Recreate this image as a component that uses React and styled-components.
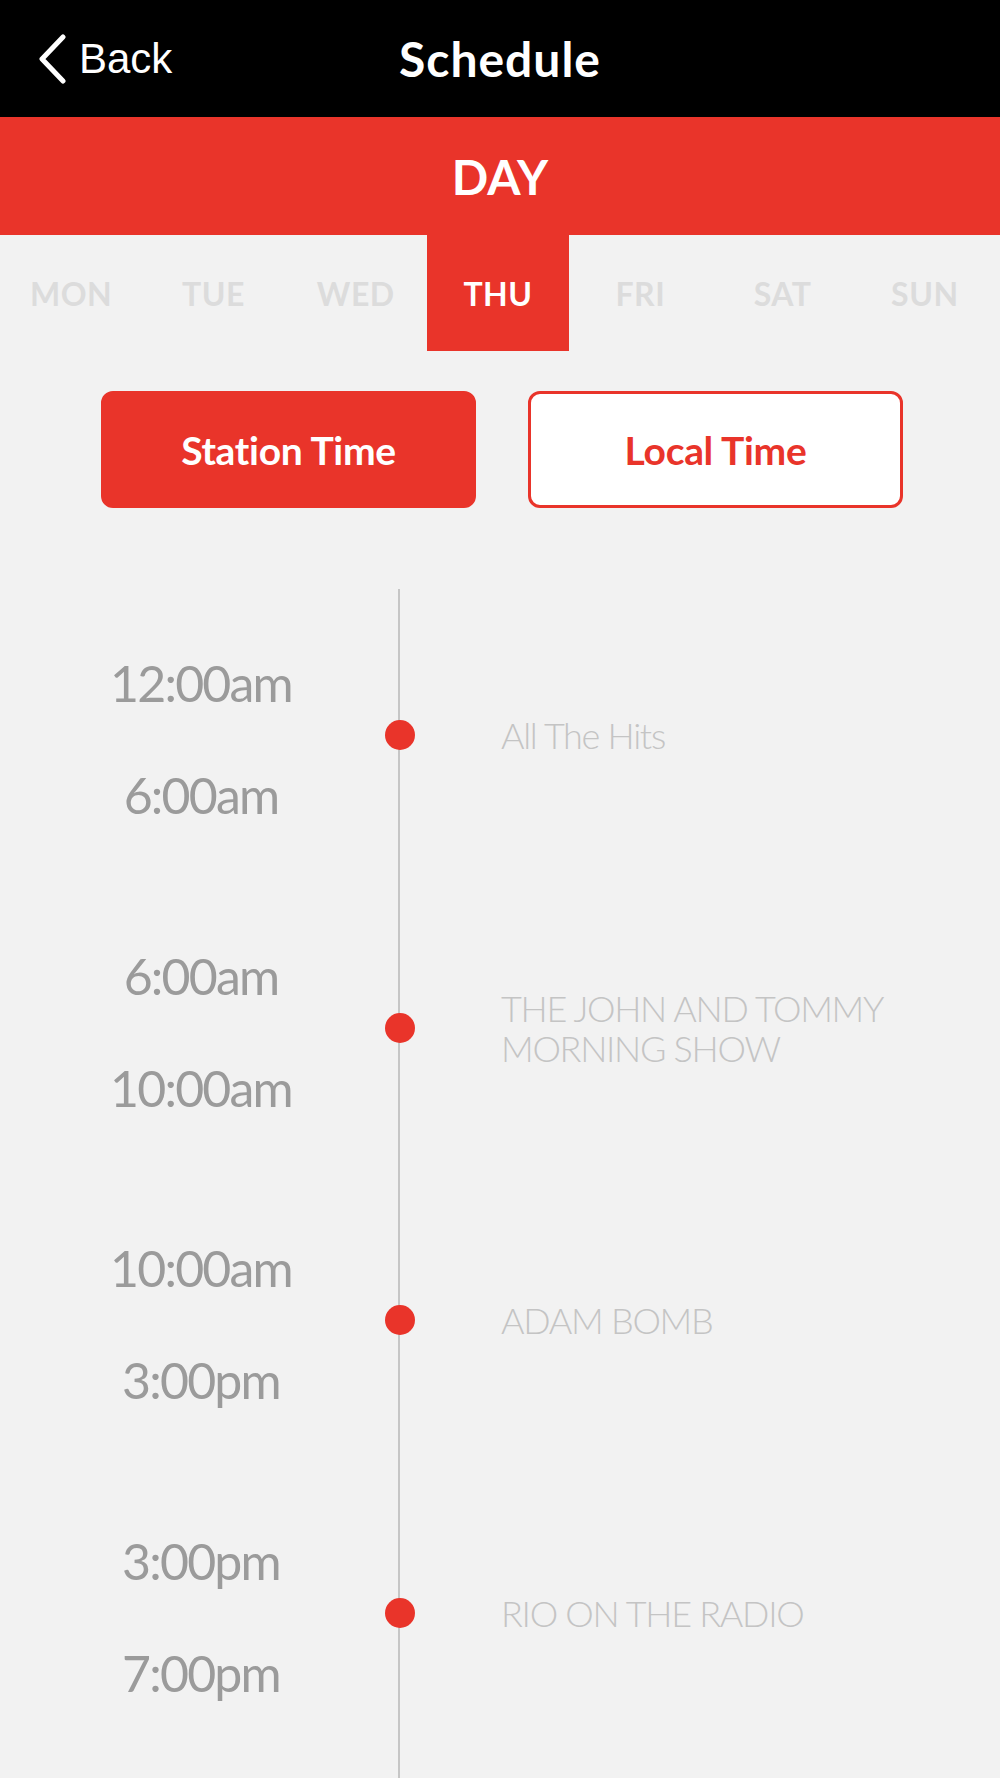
import React from "react";
import styled, { createGlobalStyle } from "styled-components";

const RED = "#e9342a";

const GlobalStyle = createGlobalStyle`
  html, body { margin: 0; padding: 0; background: #f2f2f2; }
  body { font-family: Lato, "Noto Sans", sans-serif; -webkit-font-smoothing: antialiased; }
  * { box-sizing: border-box; }
`;

const Page = styled.div`
  min-height: 100vh;
  display: flex;
  flex-direction: column;
  background: #f2f2f2;
`;

const NavBar = styled.header`
  height: 117px;
  background: #000;
  display: grid;
  grid-template-columns: 1fr auto 1fr;
  align-items: center;
`;

const BackButton = styled.button`
  justify-self: start;
  display: flex;
  align-items: center;
  gap: 12px;
  margin-left: 37px;
  padding: 0;
  background: none;
  border: 0;
  color: #fff;
  font-family: "Liberation Sans", Arial, sans-serif;
  font-size: 42px;
  cursor: pointer;
`;

const Title = styled.h1`
  margin: 0;
  color: #fff;
  font-family: Lato, sans-serif;
  font-weight: 700;
  font-size: 48px;
  letter-spacing: 1px;
`;

const DayBanner = styled.div`
  height: 118px;
  background: ${RED};
  color: #fff;
  display: flex;
  align-items: center;
  justify-content: center;
  font-weight: 700;
  font-size: 48px;
`;

const Tabs = styled.nav`
  height: 116px;
  display: grid;
  grid-template-columns: repeat(7, 1fr);
  padding-right: 4px;
`;

const Tab = styled.div`
  display: flex;
  align-items: center;
  justify-content: center;
  font-weight: 700;
  font-size: 32px;
  letter-spacing: 0.5px;
  color: ${(p) => (p.$active ? "#fff" : "#dcdcdc")};
  background: ${(p) => (p.$active ? RED : "transparent")};
`;

const ToggleRow = styled.div`
  display: flex;
  justify-content: center;
  gap: 52px;
  padding-top: 40px;
  padding-left: 4px;
`;

const ToggleButton = styled.button`
  width: 375px;
  height: 117px;
  border-radius: 12px;
  border: 3px solid ${RED};
  background: ${(p) => (p.$active ? RED : "#fff")};
  color: ${(p) => (p.$active ? "#fff" : RED)};
  font-family: Lato, sans-serif;
  font-weight: 700;
  font-size: 39px;
  letter-spacing: -0.3px;
  cursor: pointer;
`;

const Timeline = styled.section`
  flex: 1;
  position: relative;
  margin-top: 81px;
  &::before {
    content: "";
    position: absolute;
    top: 0;
    bottom: 0;
    left: 398px;
    width: 2px;
    background: #c6c6c6;
  }
`;

const Row = styled.div`
  height: 292.5px;
  display: grid;
  grid-template-columns: 372px 55px 1fr;
  align-items: center;
`;

const Times = styled.div`
  display: flex;
  flex-direction: column;
  align-items: center;
  gap: 50px;
  padding-left: 30px;
  padding-top: 8px;
`;

const Time = styled.span`
  font-size: 50px;
  line-height: 62px;
  color: #9b9b9b;
  letter-spacing: -1.8px;
`;

const Dot = styled.span`
  justify-self: center;
  width: 30px;
  height: 30px;
  border-radius: 50%;
  background: ${RED};
  position: relative;
  z-index: 1;
`;

const ShowName = styled.div`
  padding-left: 74px;
  padding-right: 50px;
  font-weight: 300;
  font-size: 36px;
  line-height: 40px;
  letter-spacing: -1.3px;
  color: #c4c4c4;
`;

const days = ["MON", "TUE", "WED", "THU", "FRI", "SAT", "SUN"];

const shows = [
  { start: "12:00am", end: "6:00am", name: "All The Hits" },
  { start: "6:00am", end: "10:00am", name: "THE JOHN AND TOMMY MORNING SHOW" },
  { start: "10:00am", end: "3:00pm", name: "ADAM BOMB" },
  { start: "3:00pm", end: "7:00pm", name: "RIO ON THE RADIO" },
];

function Chevron() {
  return (
    <svg width="30" height="50" viewBox="0 0 30 50" fill="none">
      <path d="M26 3 L5 25 L26 47" stroke="#fff" strokeWidth="5" strokeLinecap="round" strokeLinejoin="round" />
    </svg>
  );
}

export default function App() {
  return (
    <Page>
      <GlobalStyle />
      <NavBar>
        <BackButton>
          <Chevron />
          Back
        </BackButton>
        <Title>Schedule</Title>
        <div />
      </NavBar>
      <DayBanner>DAY</DayBanner>
      <Tabs>
        {days.map((d) => (
          <Tab key={d} $active={d === "THU"}>
            {d}
          </Tab>
        ))}
      </Tabs>
      <ToggleRow>
        <ToggleButton $active>Station Time</ToggleButton>
        <ToggleButton>Local Time</ToggleButton>
      </ToggleRow>
      <Timeline>
        {shows.map((s) => (
          <Row key={s.start}>
            <Times>
              <Time>{s.start}</Time>
              <Time>{s.end}</Time>
            </Times>
            <Dot />
            <ShowName>{s.name}</ShowName>
          </Row>
        ))}
      </Timeline>
    </Page>
  );
}
